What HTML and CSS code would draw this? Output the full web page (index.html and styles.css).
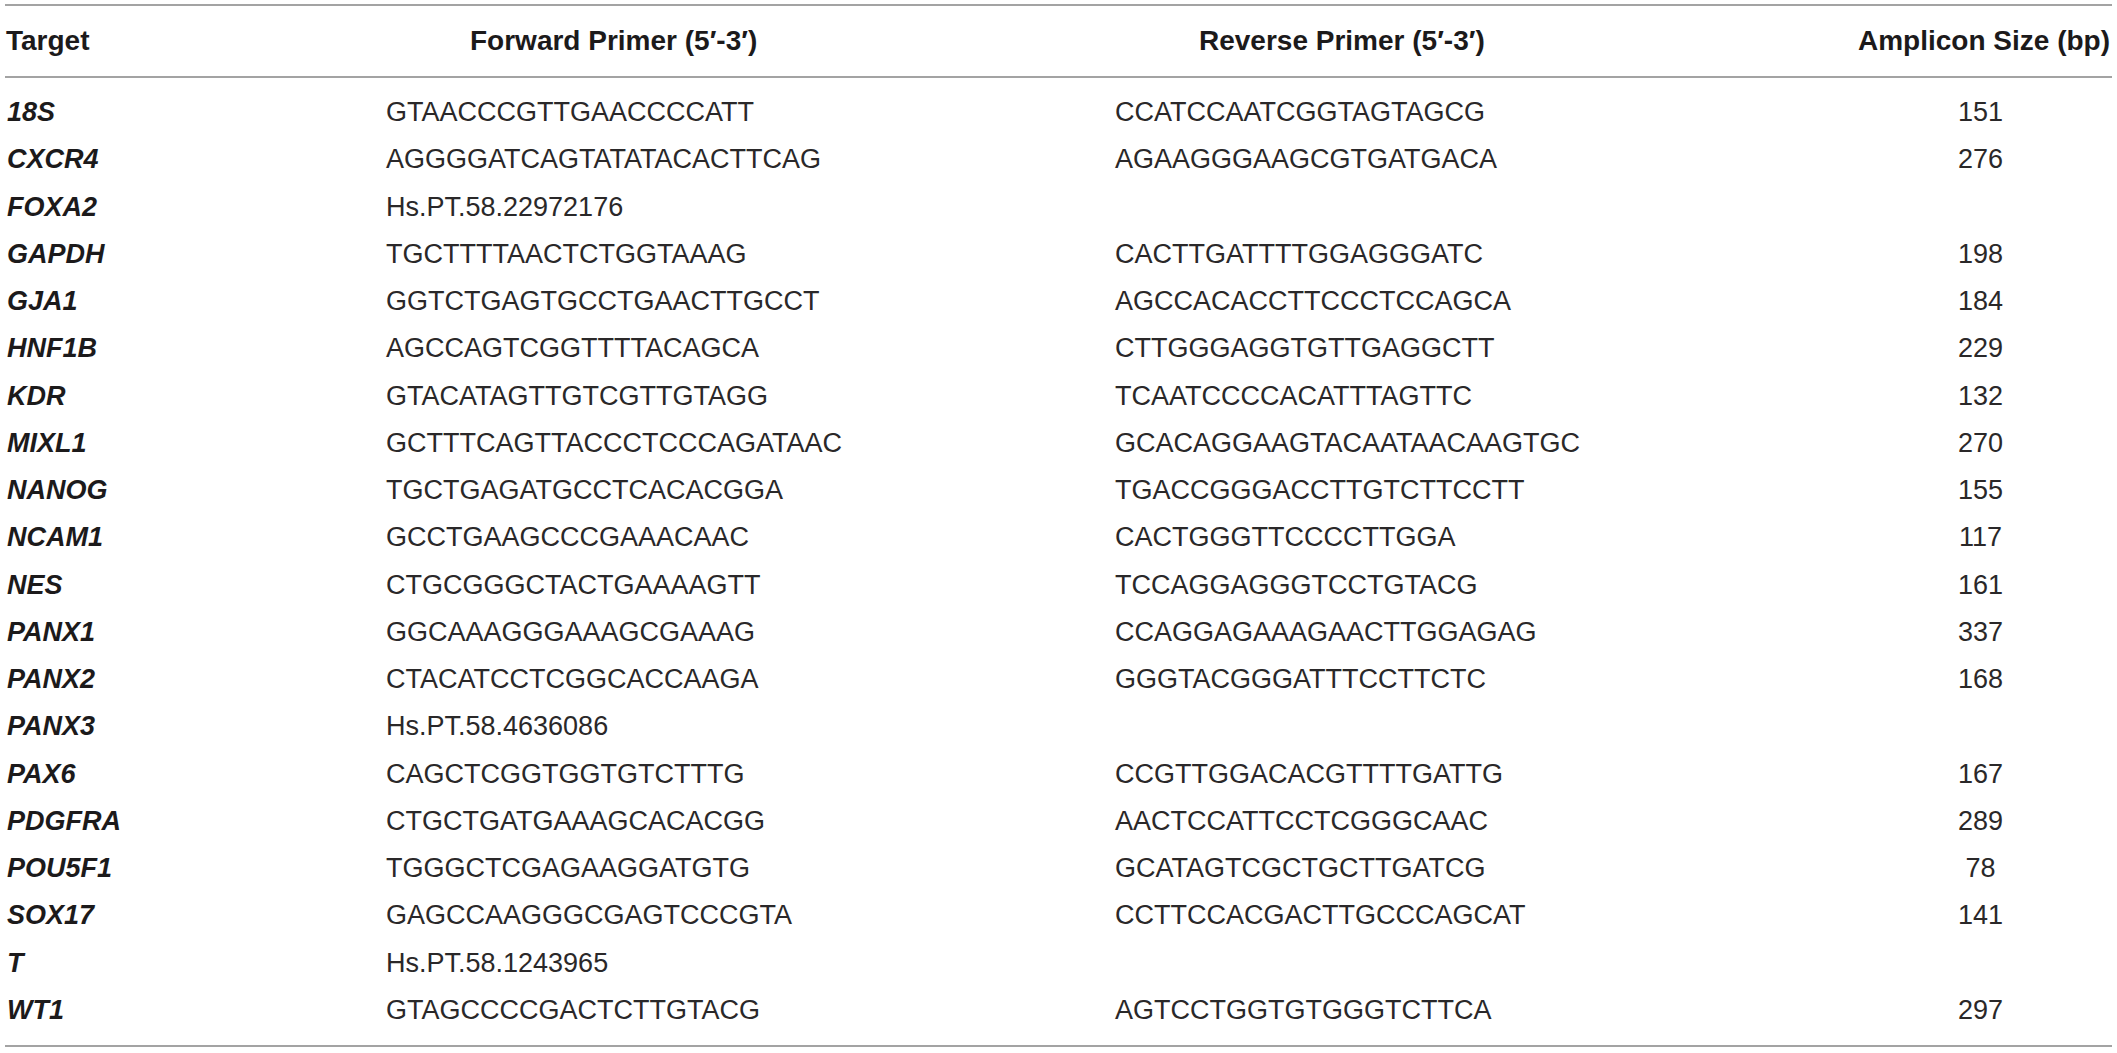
FILE: index.html
```html
<!DOCTYPE html>
<html lang="en">
<head>
<meta charset="utf-8">
<title>Primer table</title>
<link rel="stylesheet" href="styles.css">
</head>
<body>
<div class="table">
  <div class="row head">
    <div class="th target">Target</div>
    <div class="th seqhead">Forward Primer (5′-3′)</div>
    <div class="th seqhead">Reverse Primer (5′-3′)</div>
    <div class="th amp">Amplicon Size (bp)</div>
  </div>
  <div class="body">
    <div class="row"><div class="gene">18S</div><div class="seq">GTAACCCGTTGAACCCCATT</div><div class="seq">CCATCCAATCGGTAGTAGCG</div><div class="num">151</div></div>
    <div class="row"><div class="gene">CXCR4</div><div class="seq">AGGGGATCAGTATATACACTTCAG</div><div class="seq">AGAAGGGAAGCGTGATGACA</div><div class="num">276</div></div>
    <div class="row"><div class="gene">FOXA2</div><div class="seq">Hs.PT.58.22972176</div><div class="seq"></div><div class="num"></div></div>
    <div class="row"><div class="gene">GAPDH</div><div class="seq">TGCTTTTAACTCTGGTAAAG</div><div class="seq">CACTTGATTTTGGAGGGATC</div><div class="num">198</div></div>
    <div class="row"><div class="gene">GJA1</div><div class="seq">GGTCTGAGTGCCTGAACTTGCCT</div><div class="seq">AGCCACACCTTCCCTCCAGCA</div><div class="num">184</div></div>
    <div class="row"><div class="gene">HNF1B</div><div class="seq">AGCCAGTCGGTTTTACAGCA</div><div class="seq">CTTGGGAGGTGTTGAGGCTT</div><div class="num">229</div></div>
    <div class="row"><div class="gene">KDR</div><div class="seq">GTACATAGTTGTCGTTGTAGG</div><div class="seq">TCAATCCCCACATTTAGTTC</div><div class="num">132</div></div>
    <div class="row"><div class="gene">MIXL1</div><div class="seq">GCTTTCAGTTACCCTCCCAGATAAC</div><div class="seq">GCACAGGAAGTACAATAACAAGTGC</div><div class="num">270</div></div>
    <div class="row"><div class="gene">NANOG</div><div class="seq">TGCTGAGATGCCTCACACGGA</div><div class="seq">TGACCGGGACCTTGTCTTCCTT</div><div class="num">155</div></div>
    <div class="row"><div class="gene">NCAM1</div><div class="seq">GCCTGAAGCCCGAAACAAC</div><div class="seq">CACTGGGTTCCCCTTGGA</div><div class="num">117</div></div>
    <div class="row"><div class="gene">NES</div><div class="seq">CTGCGGGCTACTGAAAAGTT</div><div class="seq">TCCAGGAGGGTCCTGTACG</div><div class="num">161</div></div>
    <div class="row"><div class="gene">PANX1</div><div class="seq">GGCAAAGGGAAAGCGAAAG</div><div class="seq">CCAGGAGAAAGAACTTGGAGAG</div><div class="num">337</div></div>
    <div class="row"><div class="gene">PANX2</div><div class="seq">CTACATCCTCGGCACCAAGA</div><div class="seq">GGGTACGGGATTTCCTTCTC</div><div class="num">168</div></div>
    <div class="row"><div class="gene">PANX3</div><div class="seq">Hs.PT.58.4636086</div><div class="seq"></div><div class="num"></div></div>
    <div class="row"><div class="gene">PAX6</div><div class="seq">CAGCTCGGTGGTGTCTTTG</div><div class="seq">CCGTTGGACACGTTTTGATTG</div><div class="num">167</div></div>
    <div class="row"><div class="gene">PDGFRA</div><div class="seq">CTGCTGATGAAAGCACACGG</div><div class="seq">AACTCCATTCCTCGGGCAAC</div><div class="num">289</div></div>
    <div class="row"><div class="gene">POU5F1</div><div class="seq">TGGGCTCGAGAAGGATGTG</div><div class="seq">GCATAGTCGCTGCTTGATCG</div><div class="num">78</div></div>
    <div class="row"><div class="gene">SOX17</div><div class="seq">GAGCCAAGGGCGAGTCCCGTA</div><div class="seq">CCTTCCACGACTTGCCCAGCAT</div><div class="num">141</div></div>
    <div class="row"><div class="gene">T</div><div class="seq">Hs.PT.58.1243965</div><div class="seq"></div><div class="num"></div></div>
    <div class="row"><div class="gene">WT1</div><div class="seq">GTAGCCCCGACTCTTGTACG</div><div class="seq">AGTCCTGGTGTGGGTCTTCA</div><div class="num">297</div></div>
  </div>
</div>
</body>
</html>
```

FILE: styles.css
```css
html, body {
  margin: 0;
  padding: 0;
  background: #ffffff;
}

body {
  font-family: "Liberation Sans", Arial, Helvetica, sans-serif;
  color: #231f20;
}

.table {
  margin: 4px 0 0 5px;
  width: 2107px;
  border-top: 2px solid #a3a3a3;
  border-bottom: 2px solid #a3a3a3;
}

.row {
  display: grid;
  grid-template-columns: 381px 729px 734px 263px;
  height: 47.26px;
  align-items: center;
  line-height: 47.26px;
}

.head {
  height: 70px;
  line-height: 70px;
  border-bottom: 2px solid #a3a3a3;
}

.th {
  font-size: 28px;
  font-weight: bold;
  color: #1c1a1b;
  white-space: nowrap;
}

.target {
  padding-left: 1px;
}

.seqhead {
  padding-left: 84px;
}

.amp {
  text-align: right;
  padding-right: 2px;
}

.body {
  padding: 11px 0 11px;
}

.gene {
  font-size: 27px;
  font-weight: bold;
  font-style: italic;
  padding-left: 2px;
  color: #1c1a1b;
}

.seq {
  font-size: 27px;
  color: #2a2829;
  white-space: nowrap;
}

.num {
  font-size: 27px;
  color: #2a2829;
  text-align: center;
}
```
